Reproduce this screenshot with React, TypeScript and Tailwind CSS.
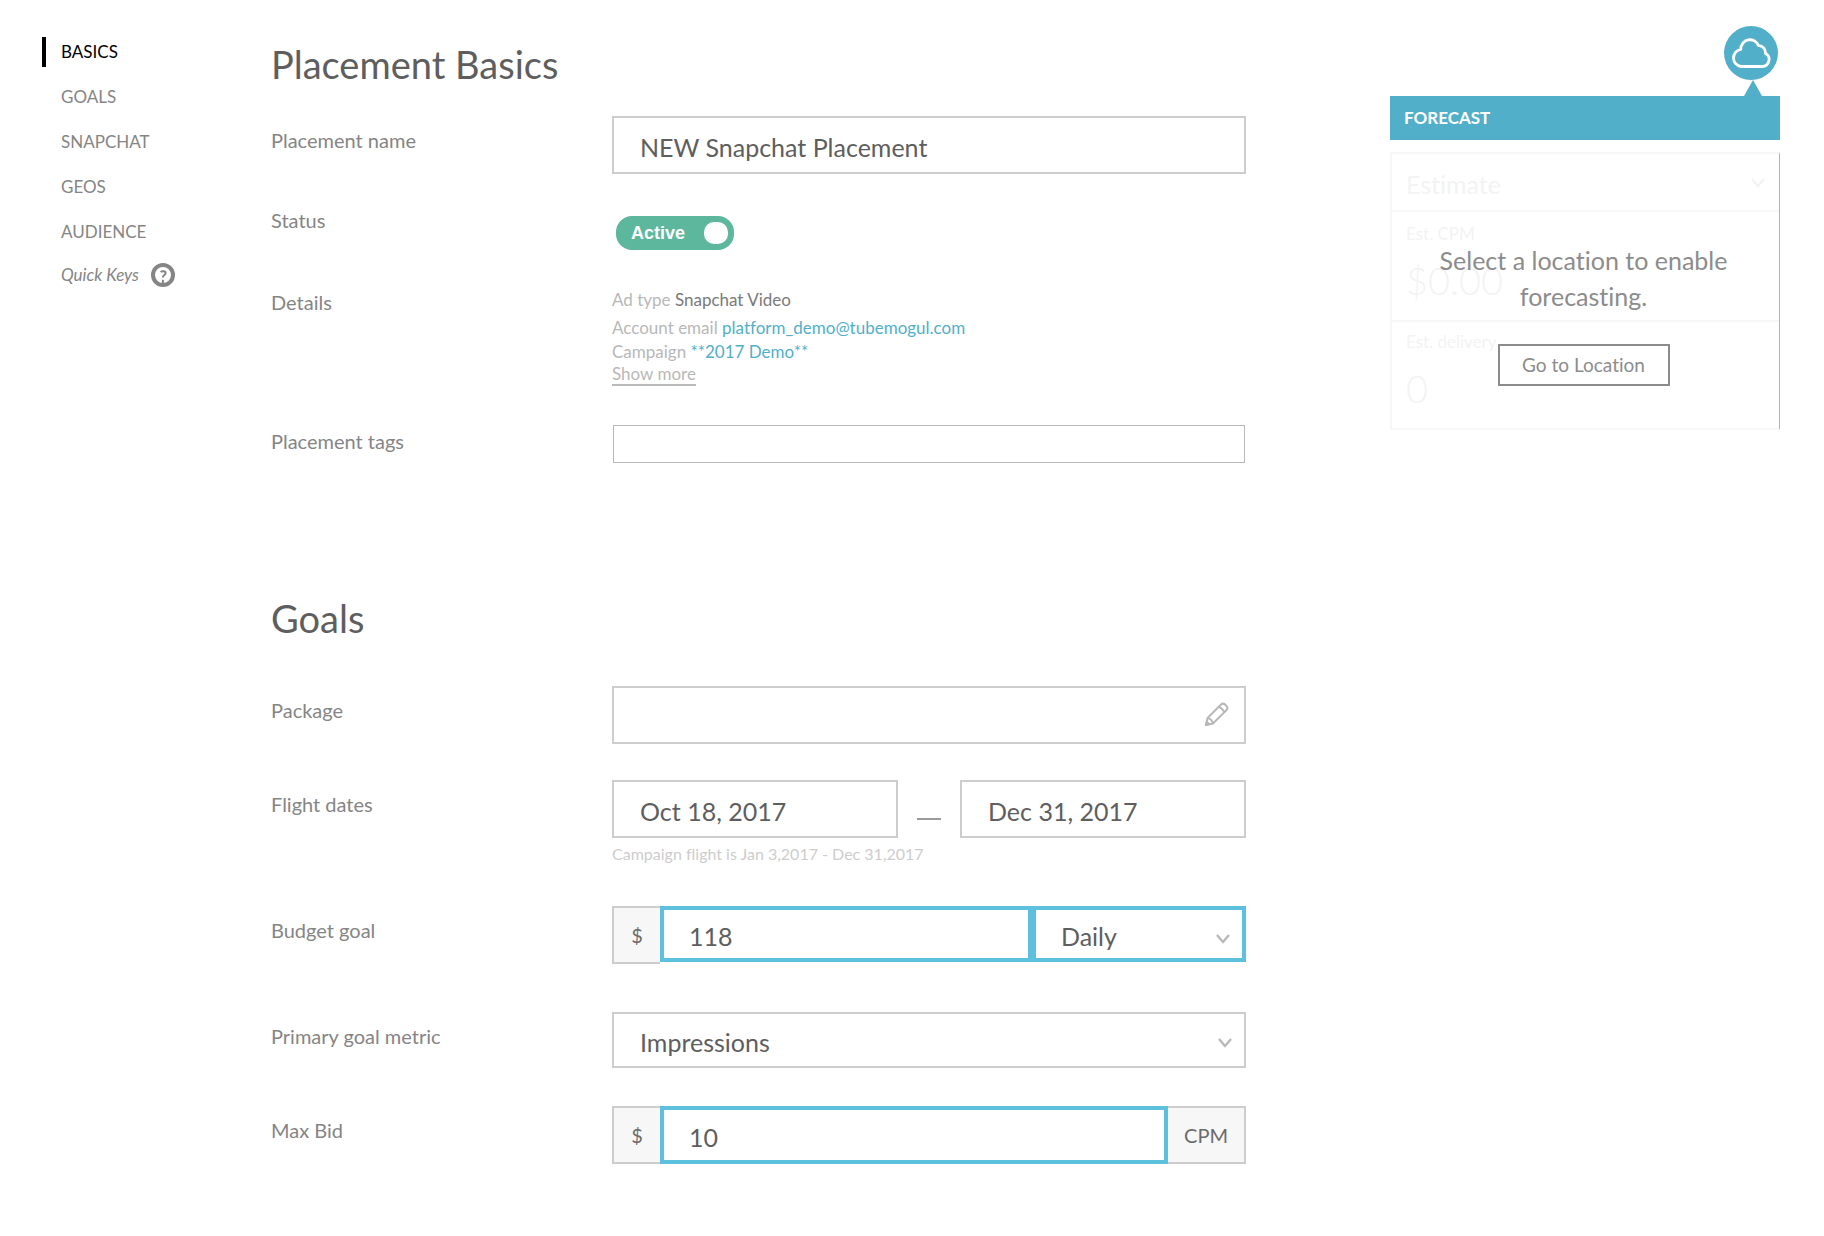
import React, { useId, useState } from 'react';
import clsx from 'clsx';

const INPUT =
  'block w-full min-w-0 rounded-none bg-white pt-1 text-[25px] leading-8 text-[#5e5e5e] outline-none';
const GREY_BOX = 'h-[58px] border-2 border-[#cdcdcd] px-[26px]';
const BLUE_BOX = 'border-4 border-[#5dc0dc] px-[25px]';

const NAV = ['Basics', 'Goals', 'Snapchat', 'Geos', 'Audience'];

function SideNav() {
  return (
    <nav className="flex w-[229px] shrink-0 flex-col pt-[29px] text-[17px]">
      {NAV.map((item, i) => (
        <a
          key={item}
          href={'#' + item.toLowerCase()}
          className={clsx(
            'flex h-[45px] items-center gap-[15px] uppercase',
            i === 0 ? 'text-black' : 'text-[#858585]',
          )}
        >
          <span className={clsx('h-[30px] w-1', i === 0 && 'bg-black')} />
          {item}
        </a>
      ))}
      <div className="flex h-[42px] items-center gap-3 pl-[19px] text-[#858585]">
        <span className="italic">Quick Keys</span>
        <button type="button" aria-label="Quick keys help">
          <svg width="24" height="24" viewBox="0 0 24 24" fill="none" stroke="currentColor">
            <circle cx="12" cy="12" r="10" strokeWidth="4" />
            <path d="M9.800 9.200c.8-1.300 4.800-1.500 4.800.9 0 2-2.700 1.900-2.700 4.400" strokeWidth="2" />
            <path d="M11.900 16.800v3.200" strokeWidth="2" />
          </svg>
        </button>
      </div>
    </nav>
  );
}

function Row({
  label,
  htmlFor,
  className,
  labelClass = 'pt-2.5',
  children,
}: {
  label: string;
  htmlFor?: string;
  className: string;
  labelClass?: string;
  children: React.ReactNode;
}) {
  const text = clsx('w-[341px] shrink-0 text-[20px] leading-7 text-[#858585]', labelClass);
  return (
    <div className={clsx('flex items-start', className)}>
      {htmlFor ? (
        <label htmlFor={htmlFor} className={text}>
          {label}
        </label>
      ) : (
        <div className={text}>{label}</div>
      )}
      <div className="min-w-0 flex-1">{children}</div>
    </div>
  );
}

function Chevron({ className }: { className: string }) {
  return (
    <svg
      className={clsx('pointer-events-none absolute', className)}
      width="14"
      height="10"
      viewBox="0 0 14 10"
      fill="none"
      stroke="currentColor"
      strokeWidth="2.400"
    >
      <path d="M1 1l6 7 6-7" />
    </svg>
  );
}

function Addon({ className, children }: { className: string; children: React.ReactNode }) {
  return (
    <span
      className={clsx(
        'flex h-[58px] shrink-0 items-center justify-center border-2 border-[#cdcdcd] bg-[#f7f7f7] text-[20px] text-[#6b6b6b]',
        className,
      )}
    >
      {children}
    </span>
  );
}

function Forecast() {
  return (
    <aside className="ml-36 mr-11 flex w-[390px] shrink-0 flex-col pt-[26px]">
      <button
        type="button"
        aria-label="Forecast"
        className="mr-0.5 flex size-[54px] items-center justify-center self-end rounded-full bg-[#52afc9]"
      >
        <svg width="40" height="32" viewBox="0 0 40 32" fill="none" stroke="#fff" strokeWidth="2.800">
          <path
            d="M10 29.500h21a7 7 0 0 0 3.300-13.200 6.600 6.600 0 0 0-6.700-7.600 9.200 9.200 0 0 0-17.800 3.600A8.700 8.700 0 0 0 10 29.500z"
            strokeLinejoin="round"
          />
        </svg>
      </button>
      <svg className="mr-[18px] self-end" width="18" height="16" viewBox="0 0 18 16" fill="#52afc9">
        <path d="M9 0l9 16H0z" />
      </svg>
      <h2 className="flex h-11 items-center bg-[#52afc9] px-3.5 text-[17px] font-bold text-white">
        FORECAST
      </h2>
      <div className="relative mt-3 border-y-2 border-l-2 border-r border-y-[#f7f7f7] border-l-[#f7f7f7] border-r-[#b3b3b3] text-[#f3f3f3]">
        <div className="relative flex h-14 items-center px-3.5 pt-1.5 text-[25px]">
          Estimate
          <Chevron className="right-3.5 top-6 text-[#f3f3f3]" />
        </div>
        <div className="h-[110px] border-t-2 border-[#f7f7f7] px-3.5 pt-2.5">
          <div className="text-[17px] leading-6">Est. CPM</div>
          <div className="pt-2.5 text-[38px] font-light leading-[48px]">$0.00</div>
        </div>
        <div className="h-[108px] border-t-2 border-[#f7f7f7] px-3.5 pt-2">
          <div className="text-[17px] leading-6">Est. delivery</div>
          <div className="pt-2.5 text-[38px] font-light leading-[48px]">0</div>
        </div>
        <div className="absolute inset-0 flex flex-col items-center pr-1 pt-[88px] text-[#8c8c8c]">
          <p className="w-[310px] text-center text-[25px] leading-9">
            Select a location to enable forecasting.
          </p>
          <button
            type="button"
            className="mt-[30px] h-[42px] w-[172px] border-2 border-[#8c8c8c] text-[19px] leading-6"
          >
            Go to Location
          </button>
        </div>
      </div>
    </aside>
  );
}

export default function App() {
  const id = useId();
  const [active, setActive] = useState(true);
  const heading = 'text-[38px] leading-[48px] text-[#5e5e5e]';
  return (
    <div className="flex min-h-screen items-start bg-white pl-[42px] pb-[72px] font-['Lato',sans-serif] [font-variant-ligatures:none]">
      <SideNav />
      <main className="min-w-0 flex-1 pt-10">
        <section id="basics">
          <h1 className={heading}>Placement Basics</h1>
          <Row label="Placement name" htmlFor={id + 'name'} className="mt-7">
            <input id={id + 'name'} className={clsx(INPUT, GREY_BOX)} defaultValue="NEW Snapchat Placement" />
          </Row>
          <Row label="Status" className="mt-8" labelClass="pt-0">
            <button
              type="button"
              role="switch"
              aria-checked={active}
              aria-label="Status"
              onClick={() => setActive(!active)}
              className="ml-1 mt-2.5 flex h-[34px] w-[118px] items-center justify-between rounded-[16px] bg-[#5cb79c] pl-[15px] pr-1.5 font-['Liberation_Sans',Arial,sans-serif] text-[18px] font-bold text-white"
            >
              {active ? 'Active' : 'Paused'}
              <span className="h-[22px] w-6 rounded-[10px] bg-white" />
            </button>
          </Row>
          <Row label="Details" className="mt-[38px]" labelClass="pt-0">
            <div className="text-[17px] leading-6 text-[#b8b8b8]">
              <p>
                Ad type <span className="text-[#7a7a7a]">Snapchat Video</span>
              </p>
              <p className="pt-1">
                Account email{' '}
                <a href="mailto:platform_demo@tubemogul.com" className="text-[#52afc9]">
                  platform_demo@tubemogul.com
                </a>
              </p>
              <p>
                Campaign{' '}
                <a href="#campaign" className="text-[#52afc9]">
                  **2017 Demo**
                </a>
              </p>
              <button type="button" className="block border-b-2 border-[#b8b8b8] leading-5">
                Show more
              </button>
            </div>
          </Row>
          <Row label="Placement tags" htmlFor={id + 'tags'} className="mt-[39px]" labelClass="pt-0.5">
            <div className="px-px">
              <input
                id={id + 'tags'}
                className="block h-[38px] w-full border border-[#b9b9b9] bg-white px-3 text-[17px] text-[#5e5e5e] outline-none"
              />
            </div>
          </Row>
        </section>

        <section id="goals" className="pt-[131px]">
          <h2 className={heading}>Goals</h2>
          <Row label="Package" htmlFor={id + 'package'} className="mt-11">
            <div className="relative">
              <input id={id + 'package'} className={clsx(INPUT, GREY_BOX)} />
              <button type="button" aria-label="Edit package" className="absolute right-[17px] top-4">
                <svg
                  width="25"
                  height="25"
                  viewBox="0 0 25 25"
                  fill="none"
                  stroke="#b8b8b8"
                  strokeWidth="2"
                  strokeLinejoin="round"
                >
                  <path d="M2 23l1.500-7L16.800 2.700a3.200 3.200 0 0 1 4.500 0l1 1a3.200 3.200 0 0 1 0 4.500L9 21.500z" />
                  <path d="M14.800 4.700c1.900.6 4.900 3.600 5.500 5.500M3.500 16c2.600.3 5.200 2.900 5.500 5.500" />
                  <path d="M2 23l.7-3.200 2.500 2.500z" fill="#b8b8b8" />
                </svg>
              </button>
            </div>
          </Row>
          <Row label="Flight dates" htmlFor={id + 'start'} className="mt-9">
            <div className="flex items-center">
              <input id={id + 'start'} className={clsx(INPUT, GREY_BOX, 'flex-1')} defaultValue="Oct 18, 2017" />
              <span className="mx-[19px] mt-5 h-0.5 w-6 shrink-0 bg-[#9a9a9a]" />
              <input
                aria-label="Flight end date"
                className={clsx(INPUT, GREY_BOX, 'flex-1')}
                defaultValue="Dec 31, 2017"
              />
            </div>
            <p className="pt-1 text-[16px] leading-6 text-[#cdcdcd]">
              Campaign flight is Jan 3,2017 - Dec 31,2017
            </p>
          </Row>
          <Row label="Budget goal" htmlFor={id + 'budget'} className="mt-10">
            <div className="flex items-start">
              <Addon className="w-12 border-r-0">$</Addon>
              <input id={id + 'budget'} className={clsx(INPUT, BLUE_BOX, 'h-14 flex-1')} defaultValue="118" />
              <div className="relative w-[214px] shrink-0">
                <select
                  aria-label="Budget period"
                  defaultValue="Daily"
                  className={clsx(INPUT, BLUE_BOX, 'h-14 appearance-none')}
                >
                  <option>Daily</option>
                  <option>Total</option>
                </select>
                <Chevron className="right-4 top-[28px] text-[#b8b8b8]" />
              </div>
            </div>
          </Row>
          <Row label="Primary goal metric" htmlFor={id + 'metric'} className="mt-12">
            <div className="relative">
              <select
                id={id + 'metric'}
                defaultValue="Impressions"
                className={clsx(INPUT, 'h-14 appearance-none border-2 border-[#cdcdcd] px-[26px]')}
              >
                <option>Impressions</option>
                <option>Views</option>
              </select>
              <Chevron className="right-3.5 top-[26px] text-[#b8b8b8]" />
            </div>
          </Row>
          <Row label="Max Bid" htmlFor={id + 'bid'} className="mt-[38px]">
            <div className="flex items-start">
              <Addon className="w-12 border-r-0">$</Addon>
              <input id={id + 'bid'} className={clsx(INPUT, BLUE_BOX, 'h-[58px] flex-1')} defaultValue="10" />
              <Addon className="w-[78px] border-l-0">CPM</Addon>
            </div>
          </Row>
        </section>
      </main>
      <Forecast />
    </div>
  );
}
